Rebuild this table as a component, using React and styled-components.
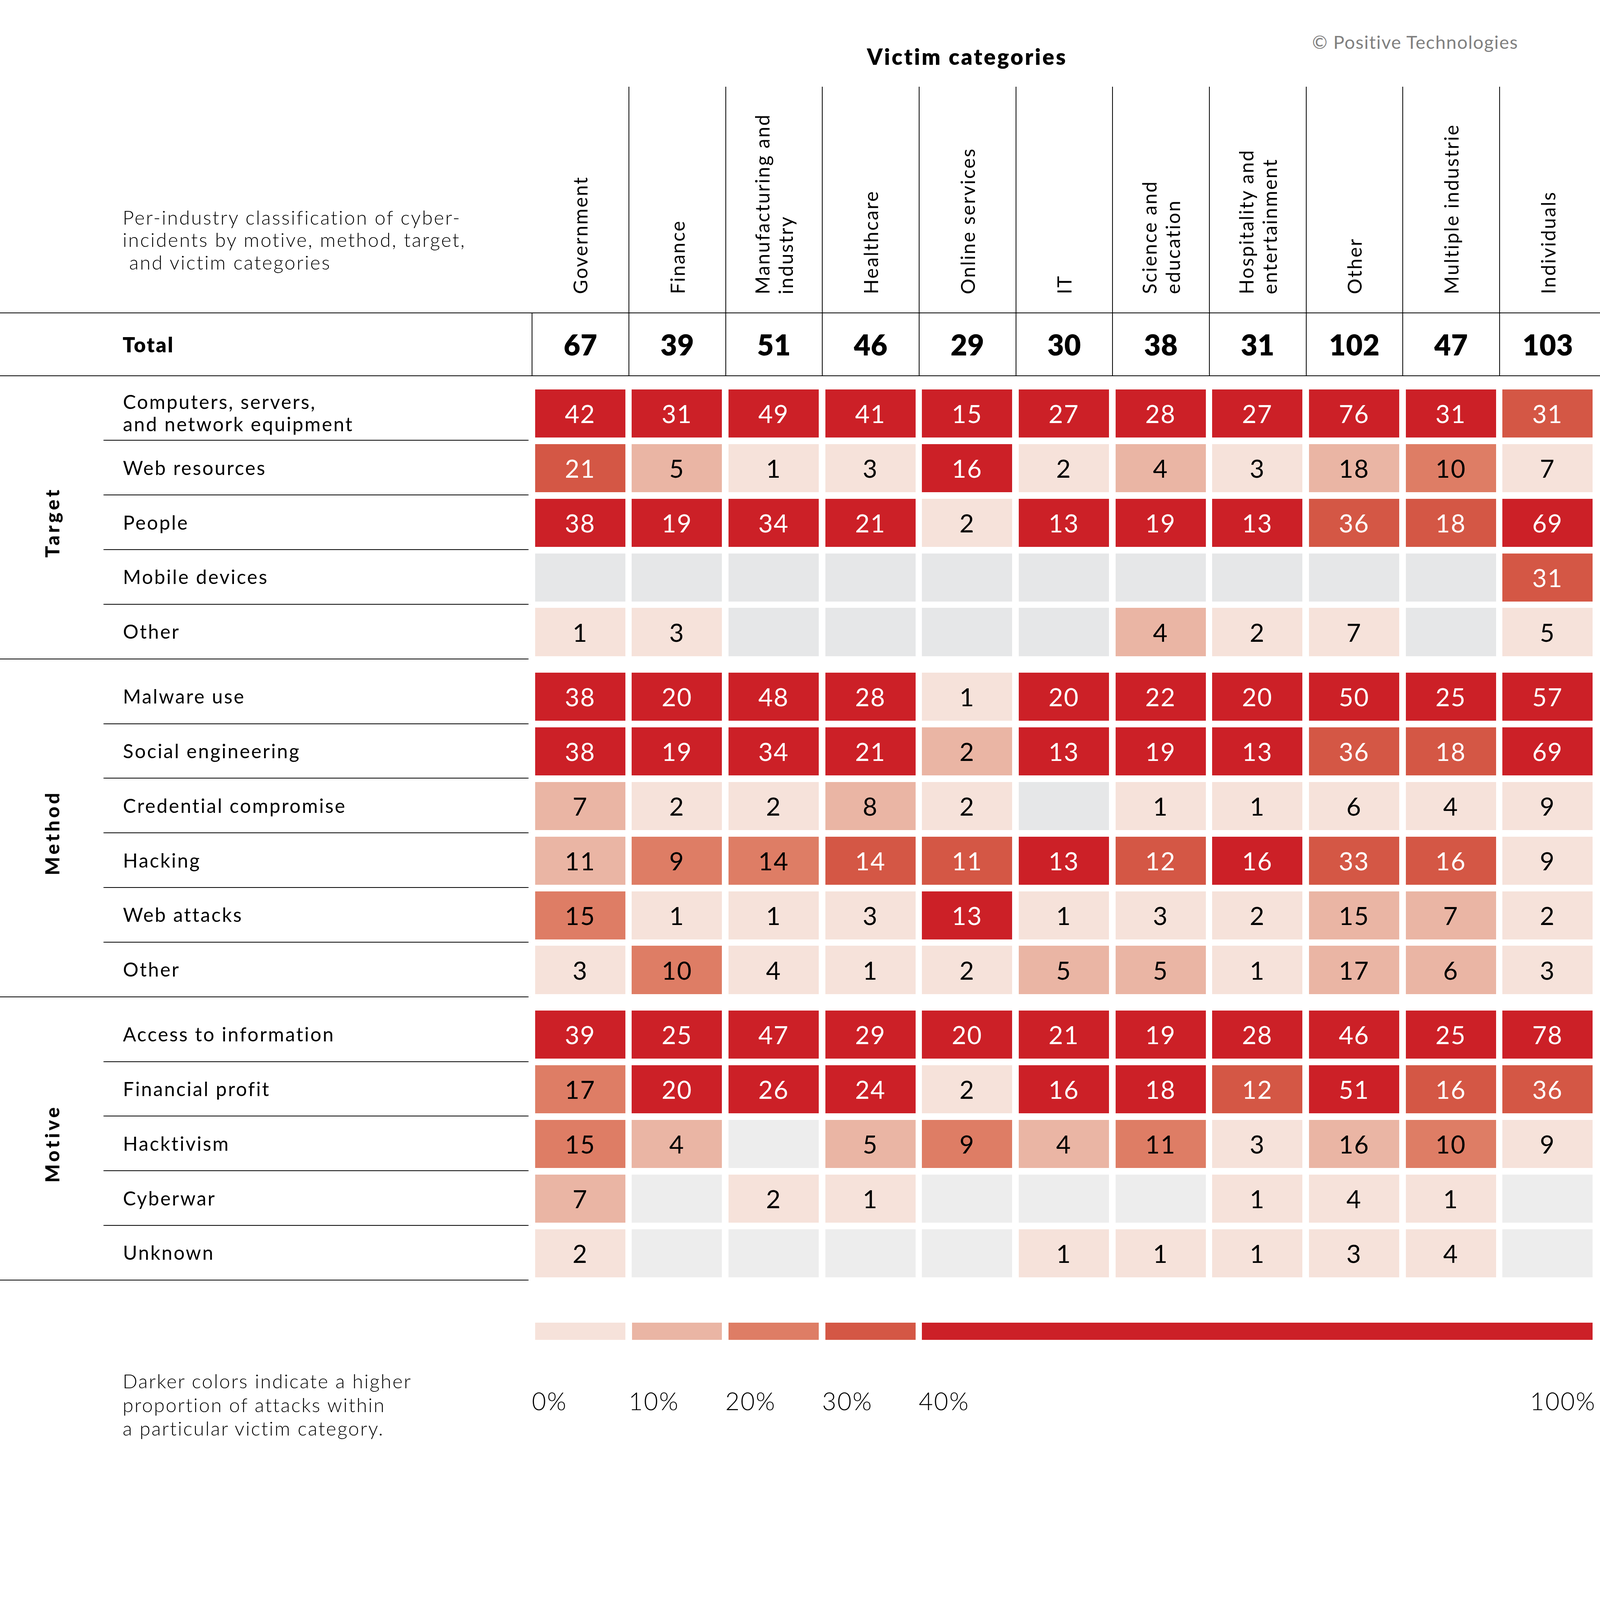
import React from "react";
import styled, { createGlobalStyle } from "styled-components";

const W = 1565;
const H = 1441;
const COL = 94.62;
const LEFT = 520.2;
const GRID = `${LEFT}px repeat(11, ${COL}px)`;
const LINE = "1px solid #000";

const shades = {
    4: "#cc2027",
    3: "#d45745",
    2: "#de7d65",
    1: "#eab5a4",
    0: "#f6e2da",
};

const GlobalStyle = createGlobalStyle`
    *, *::before, *::after { box-sizing: border-box; }
    html, body { margin: 0; padding: 0; background: #fff; overflow: hidden; }
    body { font-family: Lato, "Open Sans", sans-serif; }
`;

const Page = styled.div`
    width: ${W}px;
    height: ${H}px;
    color: #000;
    font-family: Lato, "Open Sans", sans-serif;
`;

const TopBar = styled.div`
    display: flex;
    align-items: flex-start;
    height: 84.7px;
`;

const Title = styled.div`
    margin-left: 848px;
    margin-top: 42px;
    font-size: 21.5px;
    line-height: 26px;
    font-weight: 800;
    letter-spacing: 1.6px;
`;

const Copyright = styled.div`
    margin-left: auto;
    margin-right: 80px;
    margin-top: 30px;
    font-size: 18px;
    line-height: 22px;
    color: #808080;
    letter-spacing: 0.6px;
`;

const Header = styled.div`
    display: grid;
    grid-template-columns: ${GRID};
    height: 221px;
`;

const Description = styled.div`
    align-self: end;
    padding: 0 0 38px 120px;
    font-size: 19px;
    font-weight: 300;
    line-height: 22px;
    letter-spacing: 1.2px;
`;

const ColHead = styled.div`
    display: flex;
    justify-content: center;
    align-items: flex-end;
    padding-bottom: 18px;
    border-left: ${(p) => (p.$first ? "none" : LINE)};
`;

const ColText = styled.div`
    writing-mode: vertical-rl;
    transform: rotate(180deg);
    white-space: nowrap;
    font-size: 19px;
    font-weight: 400;
    line-height: 23px;
    letter-spacing: 1.1px;
`;

const TotalRow = styled.div`
    display: grid;
    grid-template-columns: ${GRID};
    height: 62.3px;
    border-top: ${LINE};
    border-bottom: ${LINE};
`;

const TotalLabel = styled.div`
    display: flex;
    align-items: center;
    padding-left: 120px;
    font-size: 20px;
    font-weight: 800;
    letter-spacing: 1.2px;
`;

const TotalCell = styled.div`
    display: flex;
    align-items: center;
    justify-content: center;
    border-left: ${LINE};
    font-size: 28px;
    font-weight: 800;
    letter-spacing: 0.3px;
`;

const Group = styled.div`
    display: grid;
    grid-template-columns: 101.3px 415.6px 3.3px repeat(11, ${COL}px);
    grid-auto-rows: 53.47px;
    padding-top: 9.7px;
`;

const GroupTitle = styled.div`
    grid-column: 1;
    grid-row: 1 / span ${(p) => p.$rows};
    display: flex;
    align-items: center;
    justify-content: center;
    border-bottom: ${LINE};
`;

const GroupTitleText = styled.div`
    writing-mode: vertical-rl;
    transform: rotate(180deg);
    font-size: 19px;
    font-weight: 900;
    letter-spacing: 2.6px;
`;

const RowLabel = styled.div`
    grid-column: 2;
    display: flex;
    align-items: center;
    padding-left: 19px;
    border-bottom: ${LINE};
    font-size: 19px;
    line-height: 22px;
    letter-spacing: 1.25px;
`;

const Cell = styled.div`
    margin: 3.15px 3.2px;
    display: flex;
    align-items: center;
    justify-content: center;
    background: ${(p) => (p.$level == null ? p.$empty : shades[p.$level])};
    color: ${(p) => (p.$level >= 3 ? "#fff" : "#000")};
    font-size: 24.5px;
    font-weight: 400;
    letter-spacing: 0.8px;
`;

const LegendBar = styled.div`
    display: grid;
    grid-template-columns: ${GRID};
    height: 16.8px;
    margin-top: 41px;
`;

const Swatch = styled.div`
    grid-column: ${(p) => p.$span || "auto"};
    margin: 0 3.2px;
    background: ${(p) => p.$color};
`;

const LegendFoot = styled.div`
    display: grid;
    grid-template-columns: ${GRID};
    margin-top: 29px;
    align-items: center;
`;

const LegendNote = styled.div`
    grid-column: 1;
    padding-left: 120px;
    font-size: 19px;
    font-weight: 300;
    line-height: 23px;
    letter-spacing: 1.1px;
`;

const Pct = styled.div`
    grid-column: ${(p) => p.$col};
    justify-self: ${(p) => (p.$end ? "end" : "start")};
    margin-bottom: 8px;
    font-size: 24px;
    font-weight: 300;
    letter-spacing: 1px;
`;

const columns = [
    ["Government"],
    ["Finance"],
    ["Manufacturing and", "industry"],
    ["Healthcare"],
    ["Online services"],
    ["IT"],
    ["Science and", "education"],
    ["Hospitality and", "entertainment"],
    ["Other"],
    ["Multiple industrie"],
    ["Individuals"],
];

const totals = [67, 39, 51, 46, 29, 30, 38, 31, 102, 47, 103];

// each value: [number, shade level] or null for an empty cell
const groups = [
    {
        name: "Target",
        empty: "#e6e7e8",
        rows: [
            [["Computers, servers,", "and network equipment"], [[42, 4], [31, 4], [49, 4], [41, 4], [15, 4], [27, 4], [28, 4], [27, 4], [76, 4], [31, 4], [31, 3]]],
            [["Web resources"], [[21, 3], [5, 1], [1, 0], [3, 0], [16, 4], [2, 0], [4, 1], [3, 0], [18, 1], [10, 2], [7, 0]]],
            [["People"], [[38, 4], [19, 4], [34, 4], [21, 4], [2, 0], [13, 4], [19, 4], [13, 4], [36, 3], [18, 3], [69, 4]]],
            [["Mobile devices"], [null, null, null, null, null, null, null, null, null, null, [31, 3]]],
            [["Other"], [[1, 0], [3, 0], null, null, null, null, [4, 1], [2, 0], [7, 0], null, [5, 0]]],
        ],
    },
    {
        name: "Method",
        empty: "#e6e7e8",
        rows: [
            [["Malware use"], [[38, 4], [20, 4], [48, 4], [28, 4], [1, 0], [20, 4], [22, 4], [20, 4], [50, 4], [25, 4], [57, 4]]],
            [["Social engineering"], [[38, 4], [19, 4], [34, 4], [21, 4], [2, 1], [13, 4], [19, 4], [13, 4], [36, 3], [18, 3], [69, 4]]],
            [["Credential compromise"], [[7, 1], [2, 0], [2, 0], [8, 1], [2, 0], null, [1, 0], [1, 0], [6, 0], [4, 0], [9, 0]]],
            [["Hacking"], [[11, 1], [9, 2], [14, 2], [14, 3], [11, 3], [13, 4], [12, 3], [16, 4], [33, 3], [16, 3], [9, 0]]],
            [["Web attacks"], [[15, 2], [1, 0], [1, 0], [3, 0], [13, 4], [1, 0], [3, 0], [2, 0], [15, 1], [7, 1], [2, 0]]],
            [["Other"], [[3, 0], [10, 2], [4, 0], [1, 0], [2, 0], [5, 1], [5, 1], [1, 0], [17, 1], [6, 1], [3, 0]]],
        ],
    },
    {
        name: "Motive",
        empty: "#ededed",
        rows: [
            [["Access to information"], [[39, 4], [25, 4], [47, 4], [29, 4], [20, 4], [21, 4], [19, 4], [28, 4], [46, 4], [25, 4], [78, 4]]],
            [["Financial profit"], [[17, 2], [20, 4], [26, 4], [24, 4], [2, 0], [16, 4], [18, 4], [12, 3], [51, 4], [16, 3], [36, 3]]],
            [["Hacktivism"], [[15, 2], [4, 1], null, [5, 1], [9, 2], [4, 1], [11, 2], [3, 0], [16, 1], [10, 2], [9, 0]]],
            [["Cyberwar"], [[7, 1], null, [2, 0], [1, 0], null, null, null, [1, 0], [4, 0], [1, 0], null]],
            [["Unknown"], [[2, 0], null, null, null, null, [1, 0], [1, 0], [1, 0], [3, 0], [4, 0], null]],
        ],
    },
];

function Lines({ lines }) {
    return lines.map((l, i) => (
        <React.Fragment key={i}>
            {i > 0 && <br />}
            {l}
        </React.Fragment>
    ));
}

function DataGroup({ name, empty, rows }) {
    return (
        <Group>
            <GroupTitle $rows={rows.length}>
                <GroupTitleText>{name}</GroupTitleText>
            </GroupTitle>
            {rows.map(([label, values], r) => (
                <React.Fragment key={r}>
                    <RowLabel style={{ gridRow: r + 1 }}>
                        <div><Lines lines={label} /></div>
                    </RowLabel>
                    {values.map((v, c) => (
                        <Cell
                            key={c}
                            style={{ gridRow: r + 1, gridColumn: c + 4 }}
                            $level={v ? v[1] : null}
                            $empty={empty}
                        >
                            {v ? v[0] : ""}
                        </Cell>
                    ))}
                </React.Fragment>
            ))}
        </Group>
    );
}

export default function App() {
    // scale the 1565-wide drawing to whatever viewport we are given
    const scale =
        typeof window !== "undefined"
            ? Math.min(window.innerWidth / W, window.innerHeight / H)
            : 1;

    return (
        <Page style={{ zoom: scale }}>
            <GlobalStyle />
            <TopBar>
                <Title>Victim categories</Title>
                <Copyright>© Positive Technologies</Copyright>
            </TopBar>

            <Header>
                <Description>
                    Per-industry classification of cyber-
                    <br />
                    incidents by motive, method, target,
                    <br />
                    {"\u00a0and victim categories"}
                </Description>
                {columns.map((c, i) => (
                    <ColHead key={i} $first={i === 0}>
                        <ColText><Lines lines={c} /></ColText>
                    </ColHead>
                ))}
            </Header>

            <TotalRow>
                <TotalLabel>Total</TotalLabel>
                {totals.map((t, i) => (
                    <TotalCell key={i}>{t}</TotalCell>
                ))}
            </TotalRow>

            {groups.map((g) => (
                <DataGroup key={g.name} {...g} />
            ))}

            <LegendBar>
                <Swatch $span={2} $color={shades[0]} />
                <Swatch $span={3} $color={shades[1]} />
                <Swatch $span={4} $color={shades[2]} />
                <Swatch $span={5} $color={shades[3]} />
                <Swatch $span="6 / 13" $color={shades[4]} />
            </LegendBar>

            <LegendFoot>
                <LegendNote>
                    Darker colors indicate a higher
                    <br />
                    proportion of attacks within
                    <br />
                    a particular victim category.
                </LegendNote>
                <Pct $col={2}>0%</Pct>
                <Pct $col={3}>10%</Pct>
                <Pct $col={4}>20%</Pct>
                <Pct $col={5}>30%</Pct>
                <Pct $col={6}>40%</Pct>
                <Pct $col={12} $end>100%</Pct>
            </LegendFoot>
        </Page>
    );
}
